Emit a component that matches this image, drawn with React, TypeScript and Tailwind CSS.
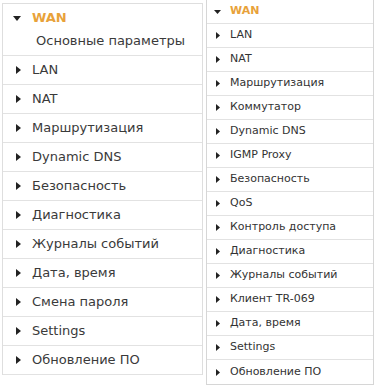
import React from "react";

const leftItems = [
  "LAN",
  "NAT",
  "Маршрутизация",
  "Dynamic DNS",
  "Безопасность",
  "Диагностика",
  "Журналы событий",
  "Дата, время",
  "Смена пароля",
  "Settings",
  "Обновление ПО",
];

const rightItems = [
  "LAN",
  "NAT",
  "Маршрутизация",
  "Коммутатор",
  "Dynamic DNS",
  "IGMP Proxy",
  "Безопасность",
  "QoS",
  "Контроль доступа",
  "Диагностика",
  "Журналы событий",
  "Клиент TR-069",
  "Дата, время",
  "Settings",
  "Обновление ПО",
];

function TriRight({ w, h }: { w: number; h: number }) {
  return (
    <svg width={w} height={h} viewBox={`0 0 ${w} ${h}`} className="shrink-0">
      <polygon points={`0,0 ${w},${h / 2} 0,${h}`} fill="#222" />
    </svg>
  );
}

function TriDown({ w, h }: { w: number; h: number }) {
  return (
    <svg width={w} height={h} viewBox={`0 0 ${w} ${h}`} className="shrink-0">
      <polygon points={`0,0 ${w},0 ${w / 2},${h}`} fill="#222" />
    </svg>
  );
}

export default function App() {
  return (
    <div
      className="flex w-[382px] h-[386px] overflow-hidden bg-white items-start pl-[2px] gap-[3px]"
      style={{ fontFamily: '"DejaVu Sans", Verdana, sans-serif' }}
    >
      {/* Left panel */}
      <div className="mt-[3px] w-[201px] border-x border-t border-[#dedede] text-[13px] text-[#3a3a3a]">
        <div className="h-[52px] border-b border-[#e2e2e2] flex flex-col">
          <div className="flex items-center h-[26px] pl-[10px] pt-[2px]">
            <TriDown w={8} h={5} />
            <span className="ml-[11px] font-bold text-[#e8a23a] text-[13px]">WAN</span>
          </div>
          <div className="pl-[33px] pt-[1px] leading-[20px]">Основные параметры</div>
        </div>
        {leftItems.map((t) => (
          <div key={t} className="h-[29px] border-b border-[#e2e2e2] flex items-center pl-[13px]">
            <TriRight w={5} h={8} />
            <span className="ml-[11px]">{t}</span>
          </div>
        ))}
      </div>

      {/* Right panel */}
      <div className="-mt-px w-[168px] border border-[#d6d6d6] text-[11px] text-[#333]">
        {["WAN", ...rightItems].map((t, i) => (
          <div
            key={t}
            className={`h-[24px] flex items-center ${i === 0 ? "pl-[7px]" : "pl-[9px]"} ${
              i === rightItems.length ? "" : "border-b border-[#e2e2e2]"
            }`}
          >
            {i === 0 ? <TriDown w={7} h={4} /> : <TriRight w={4} h={7} />}
            <span
              className={
                i === 0
                  ? "ml-[9px] font-bold text-[#e8a23a]"
                  : "ml-[10px]"
              }
            >
              {t}
            </span>
          </div>
        ))}
      </div>
    </div>
  );
}
